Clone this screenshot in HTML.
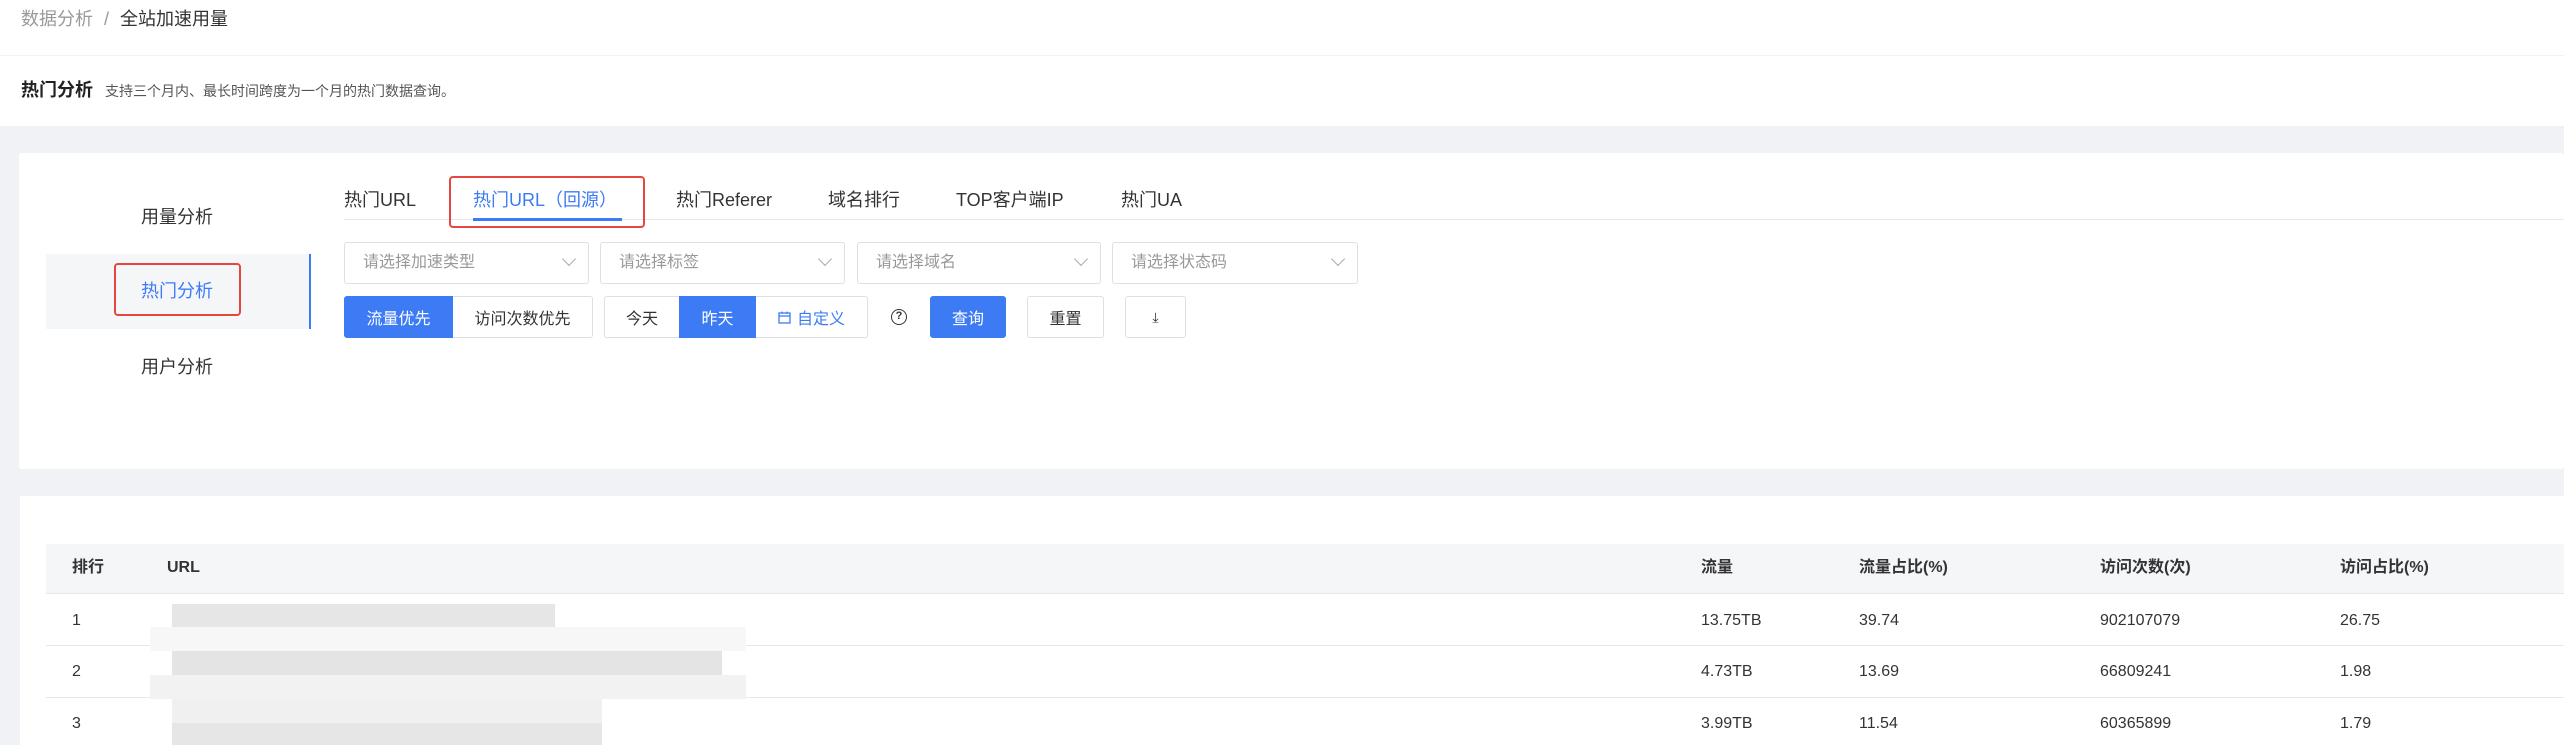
<!DOCTYPE html>
<html><head><meta charset="utf-8"><style>
*{box-sizing:border-box;margin:0;padding:0}
body{width:2564px;height:745px;overflow:hidden;background:#f0f2f5;font-family:"Liberation Sans","Noto Sans CJK SC",sans-serif;color:#333;position:relative}
.abs{position:absolute}
.t{position:absolute;white-space:nowrap;line-height:1}
.sel{position:absolute;top:242px;height:42px;border:1px solid #dcdfe6;border-radius:3px;background:#fff;font-size:16px;color:#999;padding:12px 18px;line-height:1}
.sel .ar{position:absolute;right:14px;top:12px;width:10px;height:10px;border-right:1.5px solid #aaa;border-bottom:1.5px solid #aaa;transform:rotate(45deg);top:11px}
.btn{position:absolute;top:296px;height:42px;border:1px solid #dcdfe6;background:#fff;font-size:16px;display:flex;align-items:center;justify-content:center;color:#333}
.blue{background:#3d7bf5;color:#fff;border-color:#3d7bf5}
.th,.td{position:absolute;font-size:16px;line-height:1;white-space:nowrap}
.th{font-weight:bold;color:#333;top:560px}
</style></head><body>
<div class="abs" style="left:0;top:0;width:2564px;height:55px;background:#fff"></div>
<div class="t" style="left:21px;top:10px;font-size:18px;color:#999">数据分析 <span style="margin:0 6px">/</span> <span style="color:#333">全站加速用量</span></div>
<div class="abs" style="left:0;top:56px;width:2564px;height:70px;background:#fff"></div>
<div class="t" style="left:21px;top:81px;font-size:18px;font-weight:bold;color:#222">热门分析</div>
<div class="t" style="left:105px;top:84px;font-size:14px;color:#555">支持三个月内、最长时间跨度为一个月的热门数据查询。</div>

<div class="abs" style="left:19px;top:153px;width:2545px;height:316px;background:#fff;border-radius:3px"></div>
<div class="t" style="left:141px;top:208px;font-size:18px">用量分析</div>
<div class="abs" style="left:46px;top:254px;width:265px;height:75px;background:#f5f6f8;border-right:2px solid #3d7bf5"></div>
<div class="abs" style="left:114px;top:263px;width:127px;height:53px;border:2px solid #e5473f;border-radius:4px"></div>
<div class="t" style="left:141px;top:282px;font-size:18px;color:#3d7bf5">热门分析</div>
<div class="t" style="left:141px;top:358px;font-size:18px">用户分析</div>

<div class="abs" style="left:344px;top:219px;width:2220px;height:1px;background:#e4e7ed"></div>
<div class="t" style="left:344px;top:191px;font-size:18px">热门URL</div>
<div class="t" style="left:473px;top:191px;font-size:18px;color:#3d7bf5">热门URL（回源）</div>
<div class="abs" style="left:473px;top:218px;width:149px;height:3px;background:#3d7bf5"></div>
<div class="abs" style="left:449px;top:176px;width:196px;height:52px;border:2px solid #e5473f;border-radius:4px"></div>
<div class="t" style="left:676px;top:191px;font-size:18px">热门Referer</div>
<div class="t" style="left:828px;top:191px;font-size:18px">域名排行</div>
<div class="t" style="left:956px;top:191px;font-size:18px">TOP客户端IP</div>
<div class="t" style="left:1121px;top:191px;font-size:18px">热门UA</div>

<div class="sel" style="left:344px;width:245px">请选择加速类型<span class="ar"></span></div>
<div class="sel" style="left:600px;width:245px">请选择标签<span class="ar"></span></div>
<div class="sel" style="left:857px;width:244px">请选择域名<span class="ar"></span></div>
<div class="sel" style="left:1112px;width:246px">请选择状态码<span class="ar"></span></div>

<div class="btn blue" style="left:344px;width:109px;border-radius:3px 0 0 3px">流量优先</div>
<div class="btn" style="left:453px;width:140px;border-radius:0 3px 3px 0;border-left:none">访问次数优先</div>
<div class="btn" style="left:604px;width:76px;border-radius:3px 0 0 3px">今天</div>
<div class="btn blue" style="left:679px;width:77px">昨天</div>
<div class="btn" style="left:756px;width:112px;border-radius:0 3px 3px 0;border-left:none;color:#3d7bf5">
<svg width="13" height="13" viewBox="0 0 13 13" style="margin-right:6px"><rect x="1" y="2" width="11" height="10" fill="none" stroke="#3d7bf5" stroke-width="1.3"/><line x1="1" y1="5" x2="12" y2="5" stroke="#3d7bf5" stroke-width="1.3"/><line x1="4" y1="0.5" x2="4" y2="3" stroke="#3d7bf5"/><line x1="9" y1="0.5" x2="9" y2="3" stroke="#3d7bf5"/></svg>自定义</div>
<div class="abs" style="left:891px;top:309px;width:16px;height:16px;border:1.5px solid #333;border-radius:50%;font-size:11px;text-align:center;line-height:13px;font-weight:bold">?</div>
<div class="btn blue" style="left:930px;width:76px;border-radius:3px">查询</div>
<div class="btn" style="left:1027px;width:77px;border-radius:3px">重置</div>
<div class="btn" style="left:1125px;width:61px;border-radius:3px;font-size:14px">⤓</div>

<div class="abs" style="left:20px;top:496px;width:2544px;height:249px;background:#fff"></div>
<div class="abs" style="left:46px;top:544px;width:2518px;height:50px;background:#f5f6f8;border-bottom:1px solid #e4e7ed"></div>
<div class="th" style="left:72px">排行</div>
<div class="th" style="left:167px">URL</div>
<div class="th" style="left:1701px">流量</div>
<div class="th" style="left:1859px">流量占比(%)</div>
<div class="th" style="left:2100px">访问次数(次)</div>
<div class="th" style="left:2340px">访问占比(%)</div>
<div class="abs" style="left:46px;top:645px;width:2518px;height:1px;background:#e4e7ed"></div>
<div class="abs" style="left:46px;top:697px;width:2518px;height:1px;background:#e4e7ed"></div>
<div class="abs" style="left:172px;top:604px;width:383px;height:23px;background:#e6e6e6"></div>
<div class="abs" style="left:150px;top:627px;width:596px;height:24px;background:#f7f7f7"></div>
<div class="abs" style="left:172px;top:651px;width:550px;height:24px;background:#e4e4e4"></div>
<div class="abs" style="left:150px;top:675px;width:596px;height:24px;background:#f2f2f2"></div>
<div class="abs" style="left:172px;top:699px;width:430px;height:24px;background:#f0f0f0"></div>
<div class="abs" style="left:172px;top:723px;width:430px;height:22px;background:#e6e6e6"></div>
<div class="td" style="left:72px;top:613px">1</div>
<div class="td" style="left:1701px;top:613px">13.75TB</div>
<div class="td" style="left:1859px;top:613px">39.74</div>
<div class="td" style="left:2100px;top:613px">902107079</div>
<div class="td" style="left:2340px;top:613px">26.75</div>
<div class="td" style="left:72px;top:664px">2</div>
<div class="td" style="left:1701px;top:664px">4.73TB</div>
<div class="td" style="left:1859px;top:664px">13.69</div>
<div class="td" style="left:2100px;top:664px">66809241</div>
<div class="td" style="left:2340px;top:664px">1.98</div>
<div class="td" style="left:72px;top:716px">3</div>
<div class="td" style="left:1701px;top:716px">3.99TB</div>
<div class="td" style="left:1859px;top:716px">11.54</div>
<div class="td" style="left:2100px;top:716px">60365899</div>
<div class="td" style="left:2340px;top:716px">1.79</div>
</body></html>
